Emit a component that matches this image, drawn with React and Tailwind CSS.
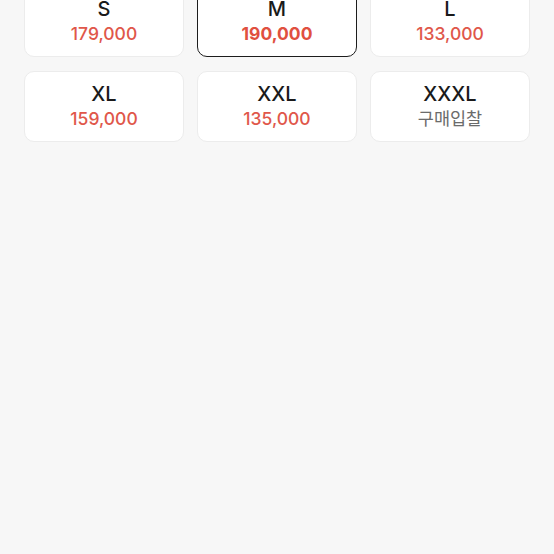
import React from 'react';

const sizes = [
  { size: 'S', price: '179,000' },
  { size: 'M', price: '190,000', selected: true },
  { size: 'L', price: '133,000' },
  { size: 'XL', price: '159,000' },
  { size: 'XXL', price: '135,000' },
  { size: 'XXXL', price: '구매입찰', bid: true },
];

const App = () => {
  return (
    <div
      className="w-[554px] h-[554px] overflow-hidden bg-[#f7f7f7]"
      style={{ fontFamily: 'Inter, "Noto Sans CJK KR", sans-serif' }}
    >
      <div className="grid grid-cols-[160px_160px_160px] gap-x-[13px] gap-y-[14px] pl-[24px] -mt-[14px]">
        {sizes.map((s) => (
          <div
            key={s.size}
            className={`h-[71px] rounded-[10px] bg-white flex flex-col items-center justify-center ${
              s.selected ? 'border-[1.5px] border-[#1c1c1c]' : 'border border-[#ececec]'
            }`}
          >
            <span className="text-[20px] leading-[24px] font-medium text-[#1a1a1a]">{s.size}</span>
            <span
              className={`text-[17.5px] leading-[26px] ${
                s.bid
                  ? 'text-[#6b6b6b] font-normal'
                  : s.selected
                  ? 'text-[#e0503f] font-bold'
                  : 'text-[#e0574a] font-medium'
              }`}
            >
              {s.price}
            </span>
          </div>
        ))}
      </div>
    </div>
  );
};

export default App;
